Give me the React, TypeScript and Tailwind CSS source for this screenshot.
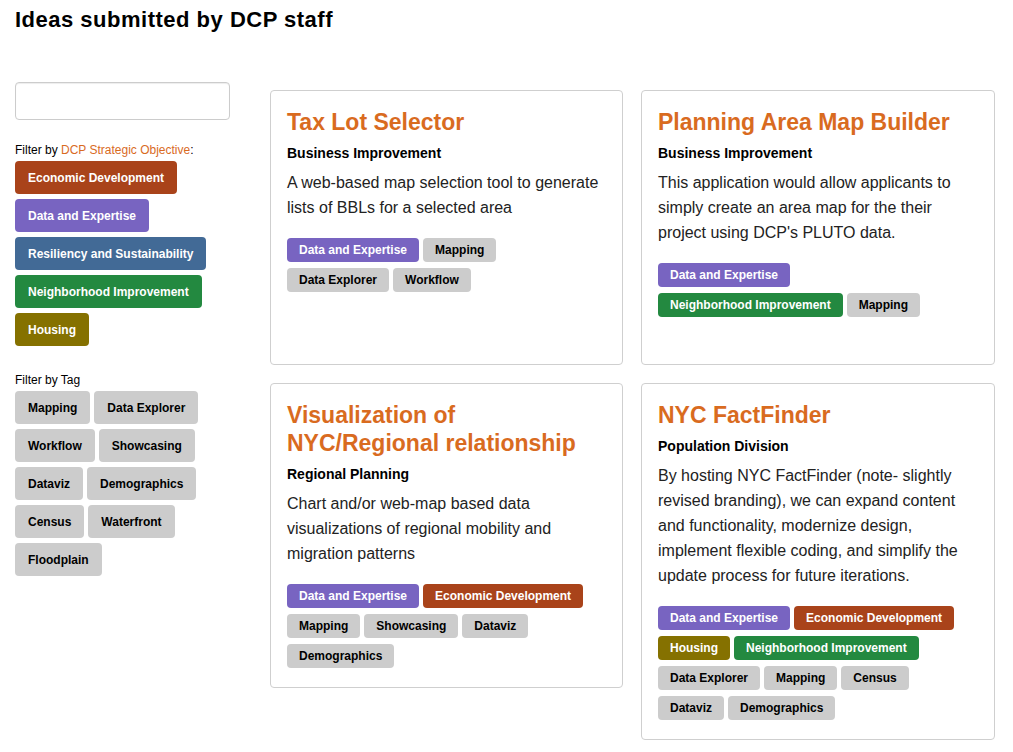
import React from 'react';

const OBJECTIVES: Record<string, string> = {
  'Economic Development': 'bg-[#a9431a]',
  'Data and Expertise': 'bg-[#7864c1]',
  'Resiliency and Sustainability': 'bg-[#426a96]',
  'Neighborhood Improvement': 'bg-[#238940]',
  Housing: 'bg-[#857100]',
};

const TAGS = ['Mapping', 'Data Explorer', 'Workflow', 'Showcasing', 'Dataviz', 'Demographics', 'Census', 'Waterfront', 'Floodplain'];

const IDEAS = [
  {
    title: 'Tax Lot Selector',
    division: 'Business Improvement',
    description: 'A web-based map selection tool to generate lists of BBLs for a selected area',
    objectives: ['Data and Expertise'],
    tags: ['Mapping', 'Data Explorer', 'Workflow'],
  },
  {
    title: 'Planning Area Map Builder',
    division: 'Business Improvement',
    description: "This application would allow applicants to simply create an area map for the their project using DCP's PLUTO data.",
    objectives: ['Data and Expertise', 'Neighborhood Improvement'],
    tags: ['Mapping'],
  },
  {
    title: 'Visualization of NYC/Regional relationship',
    division: 'Regional Planning',
    description: 'Chart and/or web-map based data visualizations of regional mobility and migration patterns',
    objectives: ['Data and Expertise', 'Economic Development'],
    tags: ['Mapping', 'Showcasing', 'Dataviz', 'Demographics'],
  },
  {
    title: 'NYC FactFinder',
    division: 'Population Division',
    description:
      'By hosting NYC FactFinder (note- slightly revised branding), we can expand content and functionality, modernize design, implement flexible coding, and simplify the update process for future iterations.',
    objectives: ['Data and Expertise', 'Economic Development', 'Housing', 'Neighborhood Improvement'],
    tags: ['Data Explorer', 'Mapping', 'Census', 'Dataviz', 'Demographics'],
  },
];

const IdeaCard = ({ idea }: { idea: (typeof IDEAS)[number] }) => (
  <div className="border border-[#cfcfcf] rounded-[4px] min-h-[275px] px-[16px] pt-[17px] pb-[19px]">
    <h2 className="text-[23px] leading-[28px] font-bold text-[#d96b1f] pr-[20px]">{idea.title}</h2>
    <h4 className="text-[14px] leading-[20px] font-bold text-black mt-[7px]">{idea.division}</h4>
    <p className="text-[16px] leading-[25px] text-[#222] mt-[7px]">{idea.description}</p>
    <div className="flex flex-wrap gap-x-[4px] gap-y-[6px] mt-[18px] pr-[12px]">
      {idea.objectives.map((o) => (
        <span key={o} className={`${OBJECTIVES[o]} text-white text-[12px] font-bold h-[24px] leading-[24px] px-3 rounded-[4px]`}>
          {o}
        </span>
      ))}
      {idea.tags.map((t) => (
        <span key={t} className="bg-[#cccccc] text-black text-[12px] font-bold h-[24px] leading-[24px] px-3 rounded-[4px]">
          {t}
        </span>
      ))}
    </div>
  </div>
);

export default function App() {
  return (
    <div className="min-h-screen bg-white text-black font-['Liberation_Sans',Arial,sans-serif] px-[15px]">
      <h1 className="text-[22px] leading-[25px] font-bold tracking-[0.5px] pt-[7px]">Ideas submitted by DCP staff</h1>

      <div className="flex mt-[50px]">
        {/* Sidebar filters */}
        <div className="w-[215px] shrink-0">
          <input
            type="text"
            className="block w-[215px] h-[38px] border border-[#cccccc] rounded-[4px] shadow-[inset_0_1px_1px_rgba(0,0,0,0.075)] bg-white"
          />

          <div className="text-[12px] leading-[17px] mt-[22px]">
            Filter by <span className="text-[#d96b1f]">DCP Strategic Objective</span>:
          </div>
          <div className="flex flex-col items-start gap-[5px] mt-[2px]">
            {Object.entries(OBJECTIVES).map(([name, cls]) => (
              <button
                key={name}
                className={`${cls} text-white text-[12px] font-bold h-[33px] px-[13px] rounded-[4px]`}
              >
                {name}
              </button>
            ))}
          </div>

          <div className="text-[12px] leading-[17px] mt-[26px]">Filter by Tag</div>
          <div className="flex flex-wrap gap-x-[4px] gap-y-[5px] mt-[2px] w-[200px]">
            {TAGS.map((t) => (
              <button key={t} className="bg-[#cccccc] text-black text-[12px] font-bold h-[33px] px-[13px] rounded-[4px]">
                {t}
              </button>
            ))}
          </div>
        </div>

        {/* Idea cards */}
        <div className="ml-[40px] grid grid-cols-[353px_354px] gap-[18px] items-start mt-[8px]">
          {IDEAS.map((idea) => (
            <IdeaCard key={idea.title} idea={idea} />
          ))}
        </div>
      </div>
    </div>
  );
}
